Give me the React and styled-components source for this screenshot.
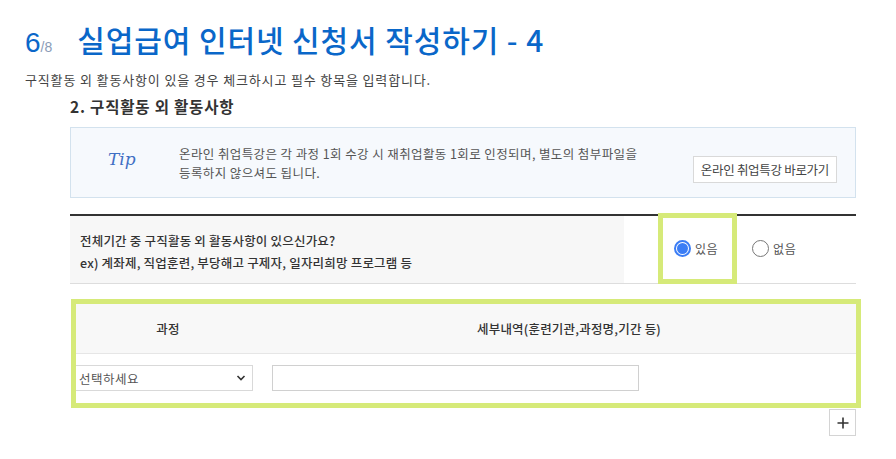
import React from "react";
import styled, { createGlobalStyle } from "styled-components";

const Global = createGlobalStyle`
  html, body { margin: 0; padding: 0; background: #fff; }
  body { font-family: "Noto Sans CJK KR", "Noto Sans", sans-serif; color: #333; }
  * { box-sizing: border-box; }
`;

const Page = styled.div`
  width: 896px;
  height: 459px;
  overflow: hidden;
  padding: 19px 0 0 25px;
`;

const Title = styled.h1`
  margin: 0;
  display: flex;
  align-items: baseline;
  color: #0a67c9;
  font-weight: 500;
  font-size: 30px;
  line-height: 40px;
  letter-spacing: 0.9px;
`;

const PageNo = styled.span`
  font-size: 28px;
  font-family: "Liberation Sans", sans-serif;
  font-weight: 400;
  letter-spacing: 0;
`;

const PageTotal = styled.span`
  font-size: 14px;
  color: #8a9cb8;
  font-family: "Liberation Sans", sans-serif;
  font-weight: 400;
  letter-spacing: 0;
  margin-right: 25px;
`;

const Subtitle = styled.p`
  margin: 4px 0 0;
  font-size: 13px;
  line-height: 18px;
  color: #444;
  letter-spacing: 0.85px;
`;

const Block = styled.div`
  margin-left: 45px;
  width: 786px;
`;

const SectionHead = styled.h2`
  margin: 5px 0 0;
  font-size: 15.5px;
  line-height: 24px;
  font-weight: 700;
  color: #333;
  letter-spacing: 0.8px;
`;

const TipBox = styled.div`
  margin-top: 9px;
  height: 71px;
  border: 1px solid #d3e2ee;
  background: #f6f9fd;
  display: flex;
  align-items: center;
  padding: 0 18px 0 37px;
`;

const TipMark = styled.span`
  font-family: "DejaVu Serif", serif;
  font-style: italic;
  font-size: 17px;
  color: #3f6fc4;
  width: 71px;
  margin-top: -8px;
`;

const TipText = styled.p`
  margin: 0;
  flex: 1;
  font-size: 12.5px;
  line-height: 19px;
  color: #555;
  letter-spacing: 0.4px;
`;

const LinkButton = styled.button`
  margin-top: 13px;
  height: 27px;
  padding: 0 7px;
  background: #fff;
  border: 1px solid #d9d9d9;
  font-family: inherit;
  font-size: 12.5px;
  color: #444;
  letter-spacing: -0.3px;
`;

const QuestionRow = styled.div`
  margin-top: 16px;
  display: flex;
  height: 70px;
  border-top: 2px solid #333;
  border-bottom: 1px solid #ddd;
`;

const QuestionCell = styled.div`
  width: 554px;
  background: #f7f7f7;
  padding: 14px 0 0 10px;
  font-size: 12.5px;
  line-height: 22px;
  font-weight: 500;
  color: #333;
  letter-spacing: 0.2px;
`;

const AnswerCell = styled.div`
  position: relative;
  flex: 1;
  display: flex;
  align-items: center;
  padding: 0 0 0 50px;
  gap: 34px;
`;

const Highlight = styled.div`
  position: absolute;
  left: 34px;
  top: -3px;
  width: 79px;
  height: 71px;
  border: 5px solid #d6ea79;
  pointer-events: none;
`;

const Option = styled.label`
  display: inline-flex;
  align-items: center;
  gap: 4px;
  font-size: 12px;
  color: #555;
  margin-top: -3px;
  letter-spacing: 0.5px;
`;

const RadioDot = styled.span`
  width: 17px;
  height: 17px;
  border-radius: 50%;
  border: ${(p) => (p.$on ? "2px solid #3b7df5" : "1px solid #777")};
  background: #fff;
  display: inline-flex;
  align-items: center;
  justify-content: center;
  &::after {
    content: "";
    display: ${(p) => (p.$on ? "block" : "none")};
    width: 11px;
    height: 11px;
    border-radius: 50%;
    background: #3b7df5;
  }
`;

const TableFrame = styled.div`
  margin-top: 15px;
  margin-left: 1px;
  width: 790px;
  border: 5px solid #d6ea79;
`;

const Table = styled.table`
  width: 100%;
  border-collapse: collapse;
  table-layout: fixed;
`;

const Th = styled.th`
  height: 49px;
  background: #f8f8f8;
  border-bottom: 1px solid #e6e6e6;
  font-size: 12.5px;
  font-weight: 500;
  color: #333;
  letter-spacing: 0.2px;
  padding: 0 0 0 ${(p) => p.$shift || 0}px;
  text-align: center;
`;

const Td = styled.td`
  height: 50px;
  padding: 0 0 0 ${(p) => p.$indent || 0}px;
  vertical-align: middle;
`;

const Select = styled.div`
  width: 177px;
  height: 26px;
  border: 1px solid #d9d9d9;
  border-left: none;
  display: flex;
  align-items: center;
  justify-content: space-between;
  padding: 0 6px 0 3px;
  font-size: 12.5px;
  color: #555;
  background: #fff;
  letter-spacing: 0.5px;
`;

const TextInput = styled.div`
  width: 367px;
  height: 26px;
  border: 1px solid #d0d0d0;
  background: #fff;
`;

const AddRow = styled.div`
  display: flex;
  justify-content: flex-end;
  padding-top: 1px;
`;

const AddButton = styled.button`
  width: 27px;
  height: 27px;
  border: 1px solid #d4d4d4;
  background: #fff;
  padding: 0;
  display: flex;
  align-items: center;
  justify-content: center;
`;

export default function App() {
  return (
    <>
      <Global />
      <Page>
        <Title>
          <PageNo>6</PageNo>
          <PageTotal>/8</PageTotal>
          실업급여 인터넷 신청서 작성하기 - 4
        </Title>
        <Subtitle>구직활동 외 활동사항이 있을 경우 체크하시고 필수 항목을 입력합니다.</Subtitle>
        <Block>
          <SectionHead>2. 구직활동 외 활동사항</SectionHead>
          <TipBox>
            <TipMark>Tip</TipMark>
            <TipText>
              온라인 취업특강은 각 과정 1회 수강 시 재취업활동 1회로 인정되며, 별도의 첨부파일을
              <br />
              등록하지 않으셔도 됩니다.
            </TipText>
            <LinkButton>온라인 취업특강 바로가기</LinkButton>
          </TipBox>
          <QuestionRow>
            <QuestionCell>
              전체기간 중 구직활동 외 활동사항이 있으신가요?
              <br />
              ex) 계좌제, 직업훈련, 부당해고 구제자, 일자리희망 프로그램 등
            </QuestionCell>
            <AnswerCell>
              <Option>
                <RadioDot $on />
                있음
              </Option>
              <Option>
                <RadioDot />
                없음
              </Option>
              <Highlight />
            </AnswerCell>
          </QuestionRow>
          <TableFrame>
            <Table>
              <colgroup>
                <col style={{ width: "184px" }} />
                <col />
              </colgroup>
              <thead>
                <tr>
                  <Th>과정</Th>
                  <Th $shift={22}>세부내역(훈련기관,과정명,기간 등)</Th>
                </tr>
              </thead>
              <tbody>
                <tr>
                  <Td>
                    <Select>
                      <span>선택하세요</span>
                      <svg width="10" height="8" viewBox="0 0 10 8">
                        <path d="M1.5 2 L5 5.5 L8.5 2" fill="none" stroke="#333" strokeWidth="1.6" />
                      </svg>
                    </Select>
                  </Td>
                  <Td $indent={12}>
                    <TextInput />
                  </Td>
                </tr>
              </tbody>
            </Table>
          </TableFrame>
          <AddRow>
            <AddButton>
              <svg width="12" height="12" viewBox="0 0 12 12">
                <path d="M6 0.5 V11.5 M0.5 6 H11.5" stroke="#333" strokeWidth="1.6" />
              </svg>
            </AddButton>
          </AddRow>
        </Block>
      </Page>
    </>
  );
}
